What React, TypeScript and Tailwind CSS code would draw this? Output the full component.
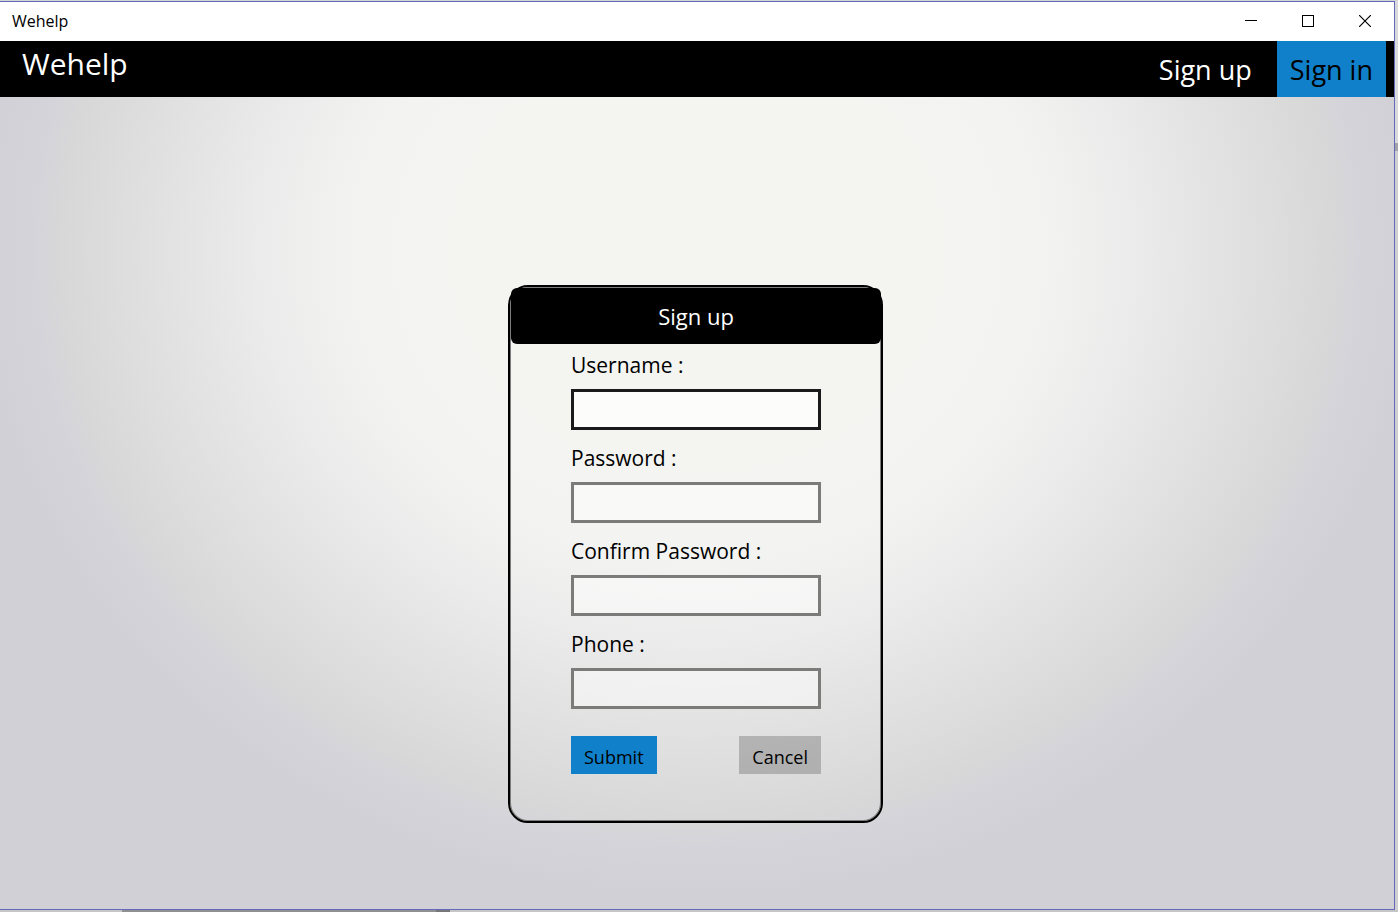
import React from "react";

const fields = [
  { id: "username", label: "Username :", type: "text" },
  { id: "password", label: "Password :", type: "password" },
  { id: "confirm-password", label: "Confirm Password :", type: "password" },
  { id: "phone", label: "Phone :", type: "tel" },
];

function TitleBar() {
  return (
    <header className="flex h-[39px] shrink-0 items-center justify-between bg-white pr-[1px] pb-[2px] pl-3">
      <span className="text-base leading-5">Wehelp</span>
      <div className="flex h-full">
        <button type="button" aria-label="Minimize" className="grid w-[57px] place-items-center">
          <svg width="12" height="12" viewBox="0 0 12 12" fill="none" stroke="black" shapeRendering="crispEdges">
            <path d="M0 5.5h12" />
          </svg>
        </button>
        <button type="button" aria-label="Maximize" className="grid w-[57px] place-items-center">
          <svg width="12" height="12" viewBox="0 0 12 12" fill="none" stroke="black" shapeRendering="crispEdges">
            <path d="M.5 .5h11v11H.5z" />
          </svg>
        </button>
        <button type="button" aria-label="Close" className="grid w-[57px] place-items-center">
          <svg width="12" height="12" viewBox="0 0 12 12" fill="none" stroke="black" strokeWidth="1.2">
            <path d="M0 0l12 12M12 0L0 12" />
          </svg>
        </button>
      </div>
    </header>
  );
}

function NavBar() {
  return (
    <nav className="flex h-14 shrink-0 justify-between bg-black pr-2 pl-[22px] text-white">
      <h1 className="pt-[3px] text-[30px] leading-10">Wehelp</h1>
      <div className="flex gap-3 text-[27px] leading-10">
        <button type="button" className="px-[13px] pt-[2px]">Sign up</button>
        <button type="button" className="bg-[#1180cb] px-[13px] pt-[2px] text-black">Sign in</button>
      </div>
    </nav>
  );
}

function SignUpCard() {
  return (
    <section className="w-[375px] rounded-[20px] border-2 border-black shadow-[inset_0_0_0_1px_#7d7d7b]">
      <h2 className="mt-px ml-px flex h-14 items-center justify-center rounded-md bg-black text-[22px] leading-8 text-white">
        Sign up
      </h2>
      <form className="pt-[5px] pr-[60px] pb-[47px] pl-[61px]" onSubmit={(e) => e.preventDefault()}>
        <div className="flex flex-col gap-3">
          {fields.map((f) => (
            <div key={f.id} className="flex flex-col gap-2">
              <label htmlFor={f.id} className="text-[21px] leading-8">{f.label}</label>
              <input
                id={f.id}
                type={f.type}
                className={
                  f.id === "username"
                    ? "h-[41px] w-full border-3 border-[#1a1a1a] bg-white/70 px-2 text-lg outline-none"
                    : "h-[41px] w-full border-3 border-[#7b7b7a] bg-white/45 px-2 text-lg outline-none"
                }
              />
            </div>
          ))}
        </div>
        <div className="mt-[27px] flex justify-between text-lg leading-6">
          <button type="submit" className="h-[38px] bg-[#1180cb] px-[13px] pt-1">Submit</button>
          <button type="button" className="h-[38px] bg-black/20 px-[13px] pt-1">Cancel</button>
        </div>
      </form>
    </section>
  );
}

export default function App() {
  return (
    <div className="flex min-h-screen flex-col bg-[#d4d4d6] pt-px font-['Open_Sans','Noto_Sans',sans-serif] text-black">
      <div className="flex flex-1">
        <div className="flex flex-1 flex-col border-t border-r border-b border-[#6568b8]">
          <TitleBar />
          <NavBar />
          <main className="flex flex-1 items-center justify-center bg-[radial-gradient(ellipse_735px_660px_at_50%_19%,#f4f5f0_0%,#f4f5f1_30%,#f3f3f2_47%,#ebebeb_60%,#e5e5e6_68%,#dddddd_79%,#d7d7d8_87%,#d5d4da_90%,#d1d0d6_98%)] pt-[102px] pr-[3px]">
            <SignUpCard />
          </main>
        </div>
        <div className="flex w-[3px] flex-col">
          <div className="h-[142px] bg-[#d9d9dc]" />
          <div className="h-2 bg-[#a3a3a8]" />
          <div className="flex-1 bg-[#cfcfd1]" />
        </div>
      </div>
      <div className="flex h-[2px] bg-[#c6c6c6]">
        <div className="ml-[122px] w-[314px] bg-[#8f9092]" />
        <div className="w-[14px] bg-[#77777a]" />
      </div>
    </div>
  );
}
